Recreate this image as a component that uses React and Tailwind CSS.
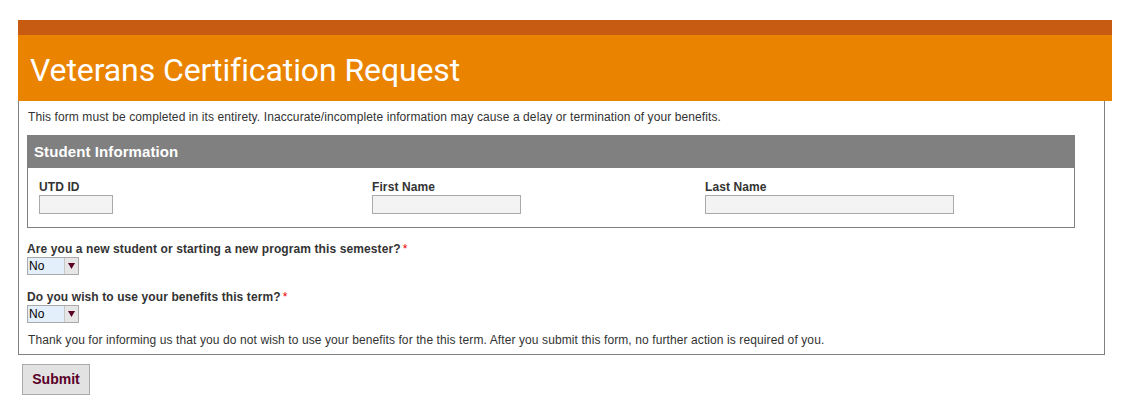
import React from "react";

const fields = [
  { label: "UTD ID", width: "w-[74px]" },
  { label: "First Name", width: "w-[149px]" },
  { label: "Last Name", width: "w-[249px]" },
];

// Fake select box like the old IE-styled dropdown
const NoSelect = () => (
  <div className="flex h-[18px] w-[52px] border border-[#a9a9a9]">
    <span className="flex-1 bg-[#e3effb] pl-[1px] text-[12px] leading-[16px] text-black">No</span>
    <span className="flex w-[14px] items-center justify-center border-l border-[#c8c8c8] bg-[#e6e6e6]">
      <svg width="7" height="6" viewBox="0 0 7 6">
        <polygon points="0,0 7,0 3.5,6" fill="#5a0028" />
      </svg>
    </span>
  </div>
);

const Question = ({ text }) => (
  <div>
    <div className="text-[12px] font-bold leading-[14px] text-[#333]">
      {text}
      <span className="ml-[2px] font-normal text-[#e00]">*</span>
    </div>
    <div className="mt-[1px]">
      <NoSelect />
    </div>
  </div>
);

export default function App() {
  return (
    <div className="bg-white pt-[20px] pl-[18px] pr-[15px] font-['Liberation_Sans',Arial,sans-serif] tracking-[0.1px] text-[#333]">
      <div className="h-[15px] bg-[#c75b12]" />
      <div className="flex h-[66px] items-center bg-[#e98300] pl-[12px] pt-[4px]">
        <h1 className="font-['Roboto',sans-serif] text-[32px] font-normal tracking-[-0.1px] text-white">
          Veterans Certification Request
        </h1>
      </div>
      <div className="mr-[7px] border border-t-0 border-[#808080] pb-[7px]">
        <p className="pl-[9px] pt-[9px] text-[12px] leading-[14px]">
          This form must be completed in its entirety. Inaccurate/incomplete information may cause a delay or termination of your benefits.
        </p>

        {/* Student info panel */}
        <div className="ml-[8px] mr-[29px] mt-[11px] border border-[#808080]">
          <div className="flex h-[32px] items-center bg-[#808080] pl-[6px] text-[15px] font-bold text-white">
            Student Information
          </div>
          <div className="grid grid-cols-[333px_333px_1fr] px-[11px] pb-[13px] pt-[12px]">
            {fields.map((f) => (
              <div key={f.label}>
                <div className="text-[12px] font-bold leading-[14px]">{f.label}</div>
                <div className={`mt-[1px] h-[19px] border border-[#aaa] bg-[#f3f3f3] ${f.width}`} />
              </div>
            ))}
          </div>
        </div>

        <div className="flex flex-col gap-[15px] pl-[8px] pt-[14px]">
          <Question text="Are you a new student or starting a new program this semester?" />
          <Question text="Do you wish to use your benefits this term?" />
        </div>

        <p className="pl-[9px] pt-[10px] text-[12px] leading-[14px]">
          Thank you for informing us that you do not wish to use your benefits for the this term. After you submit this form, no further action is required of you.
        </p>
      </div>

      <button className="ml-[4px] mt-[9px] h-[31px] w-[68px] border border-[#aaa] bg-[#e2e2e2] text-[14px] font-bold tracking-normal text-[#5a0028]">
        Submit
      </button>
    </div>
  );
}
